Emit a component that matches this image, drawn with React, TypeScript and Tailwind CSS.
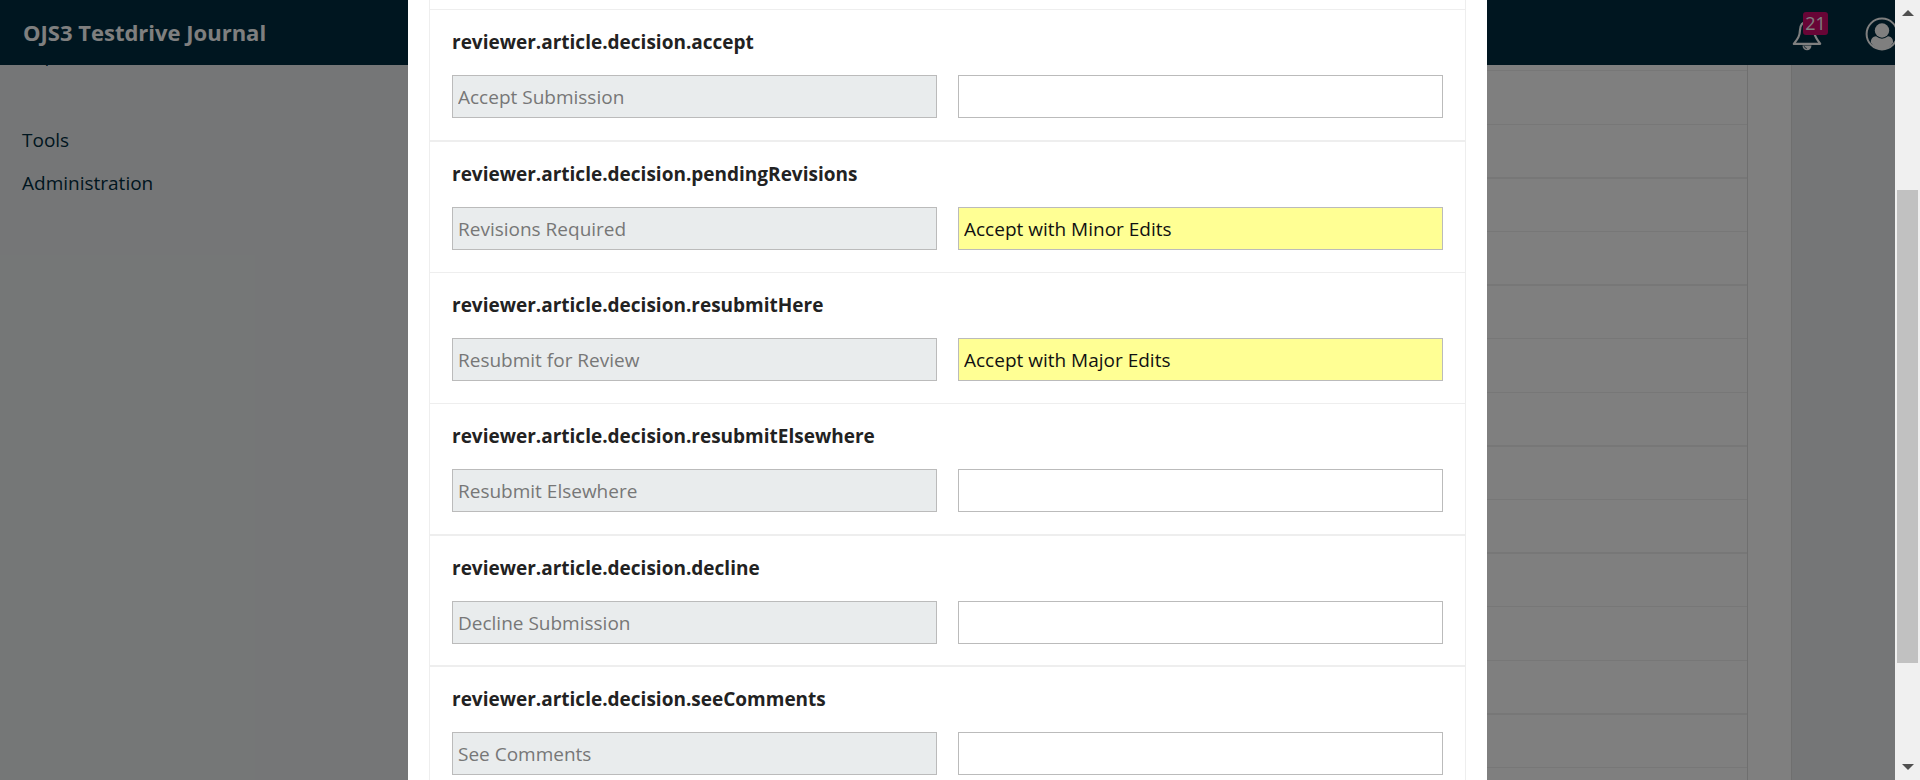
const entries = [
  { key: "accept", text: "Accept Submission", value: "", line: "border-b-2 pb-[22px]" },
  { key: "pendingRevisions", text: "Revisions Required", value: "Accept with Minor Edits", line: "border-b pb-[22px]" },
  { key: "resubmitHere", text: "Resubmit for Review", value: "Accept with Major Edits", line: "border-b pb-[22px]" },
  { key: "resubmitElsewhere", text: "Resubmit Elsewhere", value: "", line: "border-b-2 pb-[22px]" },
  { key: "decline", text: "Decline Submission", value: "", line: "border-b-2 pb-[21px]" },
  { key: "seeComments", text: "See Comments", value: "", line: "border-b pb-[22px]" },
];

function Bell() {
  return (
    <svg viewBox="0 0 30 32" className="h-8 w-[30px]" fill="none" stroke="white" strokeWidth="2.2" strokeLinejoin="round" strokeLinecap="round">
      <path d="M15 2.500C10 3 8.200 6 8 11C7.800 17.500 5.500 20 1.800 24.800H28.200C25 20.500 23.500 18.500 22.500 15" />
      <path d="M10.500 26.500a4.500 4.800 0 0 0 9 0z" fill="white" stroke="none" />
      <path d="M12.200 27.500q.5 1.800 2.300 2" stroke="#002c40" strokeWidth="0.8" />
    </svg>
  );
}

function UserIcon() {
  return (
    <svg viewBox="0 0 34 34" className="h-[34px] w-[34px] shrink-0" fill="white">
      <circle cx="17" cy="17" r="15.400" fill="none" stroke="white" strokeWidth="2" />
      <circle cx="17" cy="13.500" r="7.200" />
      <path d="M5.800 25.500C6 21.500 8 19.600 11 19.300Q17 24 23 19.300C26 19.600 28 21.500 28.200 25.500Q24 32.500 17 32.500T5.800 25.500z" />
    </svg>
  );
}

function Header() {
  return (
    <header className="flex h-[65px] shrink-0 items-center justify-between bg-[#002c40] pl-[23px] text-white">
      <a href="#" className="pb-0.5 text-[22px] font-bold leading-8">OJS3 Testdrive Journal</a>
      <div className="flex items-center gap-[43px]">
        <button type="button" aria-label="Notifications" className="relative flex pt-1">
          <Bell />
          <span className="absolute -top-[3px] left-[11px] flex h-[23px] w-[25px] items-center justify-center rounded-[3px] bg-[#d00a6c] text-[18px] leading-none">
            21
          </span>
        </button>
        <button type="button" aria-label="Account" className="-mr-1 flex pt-0.5">
          <UserIcon />
        </button>
      </div>
    </header>
  );
}

function Page() {
  return (
    <div className="flex h-full flex-col bg-[#eaedee]">
      <Header />
      <div className="flex min-h-0 flex-1">
        <nav className="flex w-[408px] shrink-0 flex-col gap-[11px] overflow-hidden pl-[22px] text-[19px] leading-8 text-[#002c40]">
          <a href="#" className="-mt-[26px]">Reports</a>
          <a href="#" className="mt-[42px]">Tools</a>
          <a href="#">Administration</a>
        </nav>
        <main className="mr-[103px] flex-1 overflow-hidden border-r border-[#dedede] bg-white pr-[43px]">
          <div className="border-r border-[#dedede] pt-[5px]">
            {Array.from({ length: 14 }, (_, i) => (
              <div
                key={i}
                className="h-[54px] border-t border-[#eee] nth-[5n+2]:h-[53px] nth-[5n+4]:h-[53px] nth-[5n+3]:border-t-2 nth-[5n+5]:border-t-2"
              />
            ))}
          </div>
        </main>
      </div>
    </div>
  );
}

function Modal() {
  return (
    <div role="dialog" aria-label="Edit locale file" className="h-full w-[1079px] overflow-hidden bg-white px-[21px]">
      <form className="border-x border-[#eee]">
        <div className="h-[10px] border-b border-[#eee]" />
        {entries.map((e) => (
          <div key={e.key} className={`border-[#eee] px-[22px] pt-[17px] ${e.line}`}>
            <label htmlFor={e.key} className="block text-[19px] font-bold leading-[30px] text-[#222]">
              reviewer.article.decision.{e.key}
            </label>
            <div className="mt-[18px] grid grid-cols-2 gap-[21px]">
              <input
                aria-label={`${e.key} reference text`}
                readOnly
                value={e.text}
                className="h-[43px] w-full border border-[#bbb] bg-[#e9eced] px-[5px] text-[19px] text-[#777] outline-none"
              />
              <input
                id={e.key}
                defaultValue={e.value}
                className={`h-[43px] w-full border border-[#bbb] px-[5px] text-[19px] text-[#111] outline-none ${e.value ? "bg-[#ffff94]" : "bg-white"}`}
              />
            </div>
          </div>
        ))}
      </form>
    </div>
  );
}

function Scrollbar() {
  return (
    <div aria-hidden="true" className="flex w-[25px] shrink-0 flex-col items-center bg-[#f0f0f0] pb-[10px] pt-[10px]">
      <svg viewBox="0 0 12 6" className="h-[6px] w-3" fill="#505050"><path d="M6 0L12 6H0z" /></svg>
      <div className="grow-[174]" />
      <div className="w-[21px] grow-[473] bg-[#c1c1c1]" />
      <div className="grow-[101]" />
      <svg viewBox="0 0 12 6" className="h-[6px] w-3" fill="#505050"><path d="M0 0H12L6 6z" /></svg>
    </div>
  );
}

export default function App() {
  return (
    <div className="flex h-screen overflow-hidden font-['Open_Sans','Noto_Sans',sans-serif]">
      <div className="relative min-w-0 flex-1 overflow-hidden">
        <Page />
        <div className="absolute inset-0 flex justify-center bg-black/50">
          <Modal />
        </div>
      </div>
      <Scrollbar />
    </div>
  );
}
